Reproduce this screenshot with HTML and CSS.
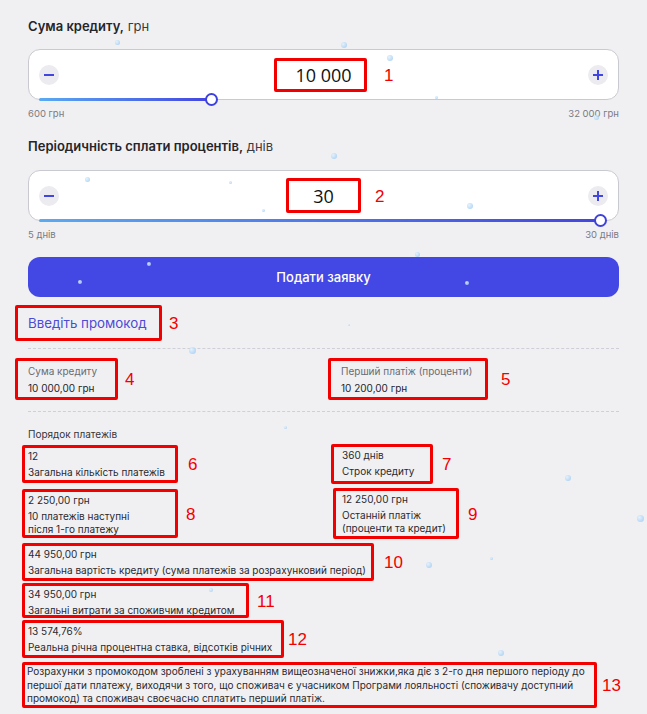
FILE: index.html
```html
<!DOCTYPE html>
<html lang="uk">
<head>
  <meta charset="UTF-8">
  <title>Калькулятор кредиту</title>
  <link rel="stylesheet" href="styles.css">
</head>
<body>
  <div class="snow">
    <span class="flake f1"></span><span class="flake f2"></span><span class="flake f3"></span>
    <span class="flake f4"></span><span class="flake f5"></span><span class="flake f6"></span>
    <span class="flake f7"></span><span class="flake f8"></span><span class="flake f9"></span>
    <span class="flake f10"></span><span class="flake f11"></span><span class="flake f12"></span>
    <span class="flake f13"></span><span class="flake f14"></span><span class="flake f15"></span>
    <span class="flake f16"></span><span class="flake f17"></span><span class="flake f18"></span>
    <span class="flake f19"></span><span class="flake f20"></span><span class="flake f21"></span>
    <span class="flake f22"></span><span class="flake f23"></span>
  </div>

  <main class="calc">
    <section class="field">
      <h2 class="field-title"><b>Сума кредиту,</b> грн</h2>
      <div class="stepper">
        <button class="step">
          <svg width="12" height="12" viewBox="0 0 12 12"><path d="M1 6h10"/></svg>
        </button>
        <div class="mark value value-sum">10 000<i class="num num-1">1</i></div>
        <button class="step">
          <svg width="12" height="12" viewBox="0 0 12 12"><path d="M1 6h10M6 1v10"/></svg>
        </button>
        <div class="track"><div class="fill" style="width: 30.7%"><span class="thumb"></span></div></div>
      </div>
      <div class="range"><span>600 грн</span><span>32 000 грн</span></div>
    </section>

    <section class="field field-next">
      <h2 class="field-title"><b>Періодичність сплати процентів,</b> днів</h2>
      <div class="stepper">
        <button class="step">
          <svg width="12" height="12" viewBox="0 0 12 12"><path d="M1 6h10"/></svg>
        </button>
        <div class="mark value value-days">30<i class="num num-2">2</i></div>
        <button class="step">
          <svg width="12" height="12" viewBox="0 0 12 12"><path d="M1 6h10M6 1v10"/></svg>
        </button>
        <div class="track"><div class="fill" style="width: 100%"><span class="thumb"></span></div></div>
      </div>
      <div class="range"><span>5 днів</span><span>30 днів</span></div>
    </section>

    <button class="submit">Подати заявку</button>

    <div class="mark promo">Введіть промокод<i class="num num-3">3</i></div>

    <hr class="dash">

    <div class="summary">
      <div class="mark note note-4">
        <div class="caption">Сума кредиту</div>
        <div>10 000,00 грн</div>
        <i class="num num-4">4</i>
      </div>
      <div class="mark note note-5">
        <div class="caption">Перший платіж (проценти)</div>
        <div>10 200,00 грн</div>
        <i class="num num-5">5</i>
      </div>
    </div>

    <hr class="dash dash-low">

    <div class="schedule-title">Порядок платежів</div>

    <div class="schedule">
      <div class="mark item item-6">
        <div class="val">12</div>
        <div class="lbl">Загальна кількість платежів</div>
        <i class="num num-6">6</i>
      </div>
      <div class="mark item item-7">
        <div class="val">360 днів</div>
        <div class="lbl">Строк кредиту</div>
        <i class="num num-7">7</i>
      </div>
      <div class="mark item item-8">
        <div class="val">2 250,00 грн</div>
        <div class="lbl">10 платежів наступні<br>після 1-го платежу</div>
        <i class="num num-8">8</i>
      </div>
      <div class="mark item item-9">
        <div class="val">12 250,00 грн</div>
        <div class="lbl">Останній платіж<br>(проценти та кредит)</div>
        <i class="num num-9">9</i>
      </div>
    </div>

    <div class="mark item item-10">
      <div class="val">44 950,00 грн</div>
      <div class="lbl">Загальна вартість кредиту (сума платежів за розрахунковий період)</div>
      <i class="num num-10">10</i>
    </div>
    <div class="mark item item-11">
      <div class="val">34 950,00 грн</div>
      <div class="lbl">Загальні витрати за споживчим кредитом</div>
      <i class="num num-11">11</i>
    </div>
    <div class="mark item item-12">
      <div class="val">13 574,76%</div>
      <div class="lbl">Реальна річна процентна ставка, відсотків річних</div>
      <i class="num num-12">12</i>
    </div>
    <div class="mark item item-13">
      <p class="disclaimer">Розрахунки з промокодом зроблені з урахуванням вищеозначеної знижки,яка діє з 2-го дня першого періоду до першої дати платежу, виходячи з того, що споживач є учасником Програми лояльності (споживачу доступний промокод) та споживач своєчасно сплатить перший платіж.</p>
      <i class="num num-13">13</i>
    </div>
  </main>
</body>
</html>
```

FILE: styles.css
```css
body {
  margin: 0;
  background: #f0f0f3;
  font-family: 'Inter', 'Roboto', sans-serif;
  color: #2b2b30;
  position: relative;
  min-height: 714px;
  overflow: hidden;
}
.calc {
  padding: 17px 28px 0;
}

/* поля з повзунками */
.field-title {
  margin: 0 0 14px;
  font-size: 13px;
  line-height: 18px;
  font-weight: 400;
  color: #3a3a40;
}
.field-title b {
  font-weight: 600;
  color: #25252a;
}
.field-next { margin-top: 16px; }
.field-next .field-title { margin-bottom: 15px; }
.stepper {
  position: relative;
  height: 51px;
  box-sizing: border-box;
  display: flex;
  align-items: center;
  justify-content: space-between;
  padding: 0 10px;
  background: #fff;
  border: 1px solid #c9c9d1;
  border-radius: 12px;
}
.step {
  width: 20px;
  height: 20px;
  padding: 0;
  border: none;
  border-radius: 50%;
  background: #ececf0;
  display: flex;
  align-items: center;
  justify-content: center;
}
.step path {
  stroke: #4146e0;
  stroke-width: 2;
  fill: none;
}
.value {
  height: 34px;
  display: flex;
  align-items: center;
  justify-content: center;
  font-family: 'Open Sans', sans-serif;
  font-size: 18px;
  color: #111;
}
.value-sum { width: 93px; margin-left: -6px; padding-left: 6px; }
.value-days { width: 75px; height: 35px; }
.track {
  position: absolute;
  left: 10px;
  right: 17px;
  bottom: -2px;
  height: 3px;
}
.fill {
  position: relative;
  height: 100%;
  border-radius: 2px;
  background: linear-gradient(90deg, #5aaaf2, #4444e0);
}
.thumb {
  position: absolute;
  right: -6px;
  top: -5px;
  width: 13px;
  height: 13px;
  box-sizing: border-box;
  border: 2.5px solid #3f41dc;
  border-radius: 50%;
  background: #fff;
}
.range {
  display: flex;
  justify-content: space-between;
  margin-top: 7px;
  font-size: 9.5px;
  line-height: 14px;
  color: #7a7a84;
}

.submit {
  display: block;
  width: 100%;
  height: 40px;
  margin-top: 15px;
  border: none;
  border-radius: 12px;
  background: #4347e3;
  color: #fff;
  font-family: 'Inter', sans-serif;
  font-size: 13px;
  font-weight: 500;
}

/* червоні рамки з номерами */
.mark {
  position: relative;
  box-sizing: border-box;
  border: 3px solid #f20000;
  border-radius: 2px;
}
.num {
  position: absolute;
  top: 50%;
  transform: translateY(-46%);
  font-family: 'Liberation Sans', sans-serif;
  font-style: normal;
  font-size: 17px;
  font-weight: 400;
  color: #f20000;
  white-space: nowrap;
}
.num-1 { left: calc(100% + 20px); }
.num-2 { left: calc(100% + 17px); }
.num-3 { left: calc(100% + 10px); }
.num-4 { left: calc(100% + 10px); }
.num-5 { left: calc(100% + 16px); }
.num-6 { left: calc(100% + 13px); }
.num-7 { left: calc(100% + 12px); }
.num-8 { left: calc(100% + 11px); }
.num-9 { left: calc(100% + 12px); }
.num-10 { left: calc(100% + 13px); }
.num-11 { left: calc(100% + 11px); }
.num-12 { left: calc(100% + 7px); }
.num-13 { left: calc(100% + 8px); }

.promo {
  width: 147px;
  margin: 8px 0 0 -13px;
  padding: 6px 0 6px 10px;
  font-size: 13.3px;
  line-height: 18px;
  color: #4b4bd6;
}

.dash {
  margin: 7px 0 0;
  border: none;
  border-top: 1px dashed #cfd0d7;
}
.dash-low { margin-top: 11px; }

.summary {
  display: grid;
  grid-template-columns: 314px 1fr;
  margin-top: 9px;
  font-size: 10px;
  line-height: 17px;
  color: #25252a;
}
.note {
  padding: 2px 0 0 10px;
}
.note .caption { color: #6b6b73; }
.note-4 { width: 103px; margin-left: -13px; }
.note-5 { width: 160px; margin-left: -14px; }

.schedule-title {
  margin-top: 14px;
  font-size: 10px;
  line-height: 16px;
  color: #34343a;
}
.schedule {
  display: grid;
  grid-template-columns: 314px 1fr;
  row-gap: 5px;
  margin-top: 3px;
}
.item {
  padding: 0 0 1px 3px;
  margin-left: -6px;
  font-size: 10px;
  line-height: 13px;
  color: #2a2a30;
}
.item .val { height: 16px; line-height: 16px; }
.item .lbl { margin-top: 2px; }
.item-6 { width: 156px; height: 38px; }
.item-7 { width: 102px; height: 40px; margin: -1px 0 0 -11px; padding-left: 8px; }
.item-8 { width: 156px; height: 49px; }
.item-9 { width: 126px; height: 51px; margin: -1px 0 0 -9px; padding-left: 6px; }
.item-10 { width: 352px; height: 38px; margin-top: 4px; }
.item-11 { width: 227px; height: 35px; margin-top: 2px; }
.item-12 { width: 262px; height: 38px; margin-top: 2px; }
.item-13 { width: 575px; height: 46px; margin-top: 4px; padding: 0 0 0 2px; }
.disclaimer {
  margin: 0;
  line-height: 13.5px;
}

/* сніжинки */
.snow {
  position: absolute;
  inset: 0;
  pointer-events: none;
  z-index: 5;
}
.flake {
  position: absolute;
  width: 5px;
  height: 5px;
  border-radius: 50%;
  background: radial-gradient(circle at 35% 35%, #e4f1fd, #93c6f0);
  opacity: 0.85;
}
.f1 { left: 115px; top: 40px; }
.f2 { left: 341px; top: 42px; width: 6px; height: 6px; }
.f3 { left: 387px; top: 55px; width: 6px; height: 6px; }
.f4 { left: 435px; top: 96px; width: 3px; height: 3px; }
.f5 { left: 594px; top: 115px; }
.f6 { left: 331px; top: 153px; width: 6px; height: 6px; }
.f7 { left: 85px; top: 177px; }
.f8 { left: 229px; top: 181px; width: 3px; height: 3px; }
.f9 { left: 262px; top: 209px; width: 3px; height: 3px; }
.f10 { left: 467px; top: 203px; width: 6px; height: 6px; }
.f11 { left: 415px; top: 252px; }
.f12 { left: 147px; top: 262px; width: 4px; height: 4px; }
.f13 { left: 78px; top: 280px; width: 4px; height: 4px; }
.f14 { left: 465px; top: 281px; width: 4px; height: 4px; }
.f15 { left: 189px; top: 347px; width: 7px; height: 7px; }
.f16 { left: 348px; top: 324px; width: 2px; height: 2px; }
.f17 { left: 284px; top: 426px; width: 3px; height: 3px; }
.f18 { left: 565px; top: 475px; width: 6px; height: 6px; }
.f19 { left: 637px; top: 515px; width: 7px; height: 7px; }
.f20 { left: 426px; top: 562px; width: 6px; height: 6px; }
.f21 { left: 498px; top: 650px; width: 6px; height: 6px; }
.f22 { left: 209px; top: 588px; width: 4px; height: 4px; }
.f23 { left: 490px; top: 557px; width: 3px; height: 3px; }
```
